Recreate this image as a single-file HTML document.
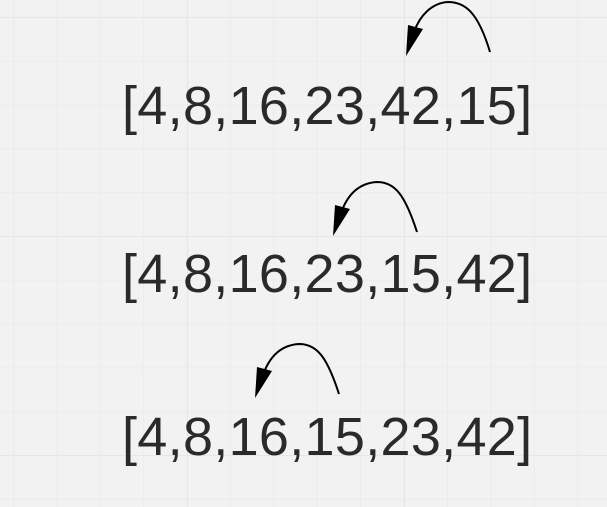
<!DOCTYPE html>
<html><head><style>
html,body{margin:0;padding:0}
body{width:607px;height:507px;background:#f2f2f2;position:relative;overflow:hidden;
background-image:
linear-gradient(to right,#e6e6e6 1px,transparent 1px),
linear-gradient(to bottom,#e6e6e6 1px,transparent 1px),
linear-gradient(to right,#ececec 1px,transparent 1px),
linear-gradient(to bottom,#ececec 1px,transparent 1px);
background-size:217px 219px,217px 219px,43.4px 43.8px,43.4px 43.8px;
background-position:187px 17px,187px 17px,13px 17px,13px 17px;}
.t{position:absolute;left:122px;font-family:"Liberation Sans",sans-serif;font-size:54px;letter-spacing:0.3px;color:#2a2a2a;line-height:1;white-space:nowrap}
svg{position:absolute;left:0;top:0}
</style></head><body>
<div class="t" style="top:79px">[4,8,16,23,42,15]</div>
<div class="t" style="top:247px">[4,8,16,23,15,42]</div>
<div class="t" style="top:410px">[4,8,16,15,23,42]</div>
<svg width="607" height="507">
<g fill="none" stroke="#000" stroke-width="2">
<path d="M490,52 C478,12 465,2 448,2 C432,3 420,15 414,32"/>
<path d="M417,232 C405,195 395,182 377,182 C360,183 348,193 341,213"/>
<path d="M339,394 C327,357 317,344 299,344 C282,345 270,355 263,375"/>
</g>
<g fill="#000">
<polygon points="406,56 408,25 423,29"/>
<polygon points="333,236 335,205 350,209"/>
<polygon points="255,398 257,367 272,371"/>
</g>
</svg>
</body></html>
